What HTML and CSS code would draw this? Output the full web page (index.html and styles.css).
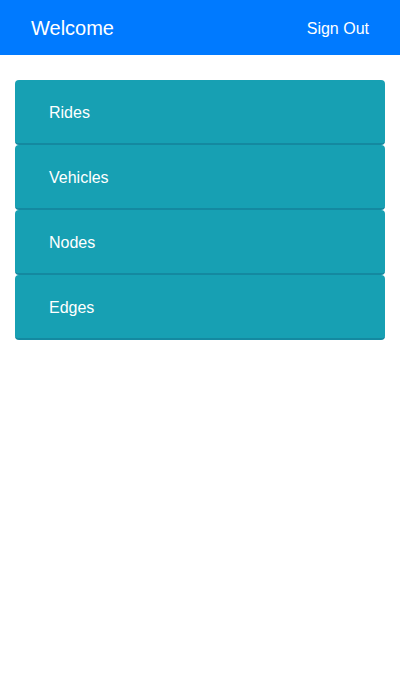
FILE: index.html
```html
<!DOCTYPE html>
<html>
<head>
<meta charset="utf-8">
<link rel="stylesheet" href="styles.css">
</head>
<body>
<header class="topbar">
  <span class="title">Welcome</span>
  <span class="signout">Sign Out</span>
</header>
<main class="menu">
  <div class="item">Rides</div>
  <div class="item">Vehicles</div>
  <div class="item">Nodes</div>
  <div class="item">Edges</div>
</main>
</body>
</html>
```
FILE: styles.css
```css
html, body {
  margin: 0;
  padding: 0;
  background: #fff;
  font-family: "Liberation Sans", Arial, sans-serif;
}
.topbar {
  height: 55px;
  box-sizing: border-box;
  background: #007aff;
  color: #fff;
  display: flex;
  align-items: center;
  justify-content: space-between;
  padding: 2px 31px 0;
}
.title {
  font-size: 20px;
}
.signout {
  font-size: 16px;
}
.menu {
  display: flex;
  flex-direction: column;
  padding: 25px 15px 0;
}
.item {
  height: 63px;
  box-sizing: border-box;
  padding: 2px 0 0 34px;
  background: #17a0b3;
  border-bottom: 2px solid #1489a0;
  border-radius: 4px;
  color: #fff;
  font-size: 16px;
  display: flex;
  align-items: center;
}
.item {
  height: 65px;
}
```
